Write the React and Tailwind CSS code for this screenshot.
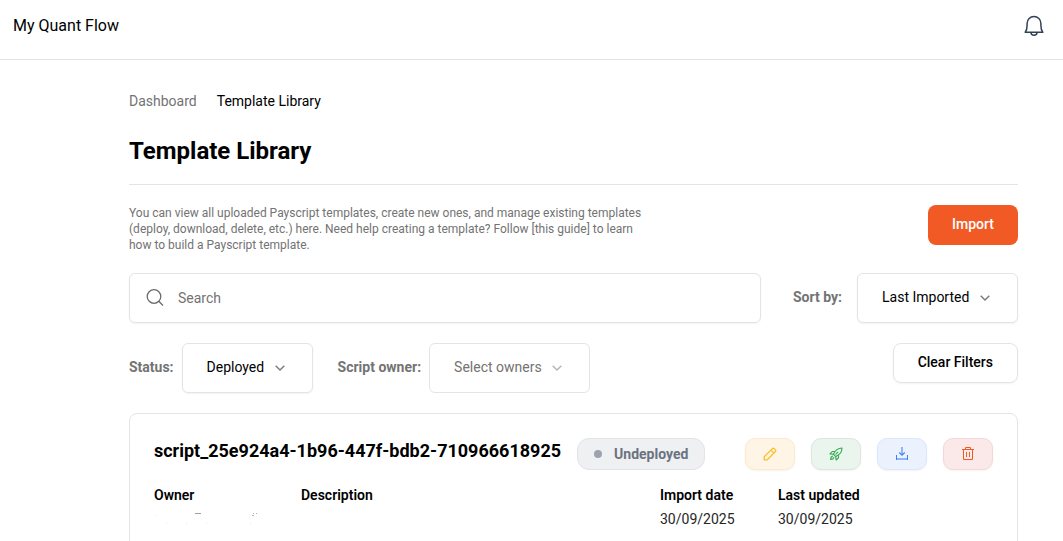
import React, { useState } from 'react';

// Icons
const BellIcon = () => (
  <svg viewBox="0 0 24 24" className="size-6" fill="none" stroke="#334155" strokeWidth="1.5" strokeLinejoin="round" aria-hidden="true">
    <path d="M3.2 18.3c1.3-1.6 1.9-3.7 1.9-6.8V9.4a6.9 6.9 0 0 1 13.8 0v2.1c0 3.1.6 5.2 1.9 6.8z" />
    <path d="M9 18.6a3 2.6 0 0 0 6 0" />
  </svg>
);

const SearchIcon = () => (
  <svg viewBox="0 0 18 18" className="size-[18px] shrink-0" fill="none" stroke="#6b6b6b" strokeWidth="1.3" aria-hidden="true">
    <circle cx="8" cy="7.500" r="6.800" />
    <path d="M12.800 12.300 17 16.500" />
  </svg>
);

const ChevronIcon = ({ className }) => (
  <svg viewBox="0 0 10 6" className={className} fill="none" stroke="currentColor" strokeWidth="1.4" aria-hidden="true">
    <path d="M.7.7 5 5 9.3.7" />
  </svg>
);

const PencilIcon = () => (
  <svg viewBox="0 0 14 14" className="size-3.5" fill="none" stroke="#fbbf24" strokeWidth="1.3" strokeLinejoin="round" aria-hidden="true">
    <path d="M1.2 12.8v-3L9.4 1.6a1.2 1.2 0 0 1 1.7 0l1.3 1.3a1.2 1.2 0 0 1 0 1.7l-8.2 8.2zM7.9 3.1l3 3" />
  </svg>
);

const RocketIcon = () => (
  <svg viewBox="0 0 14 14" className="size-3.5" fill="none" stroke="#34a853" strokeWidth="1.1" strokeLinejoin="round" strokeLinecap="round" aria-hidden="true">
    <path d="M4.4 7.2C6 3.6 8.8 1.1 13 1c0 4.2-2.6 7-6.2 8.6z" />
    <path d="M5.6 4.5H3.2L1 6.9l3.4.3M9.5 8.4v2.4L7.1 13l-.3-3.4" />
    <path d="M3.5 9.1c-1.4.4-1.9 1.6-1.9 3.3 1.7 0 2.9-.5 3.3-1.9M6.8 7.2l2-2" />
  </svg>
);

const DownloadIcon = () => (
  <svg viewBox="0 0 14 14" className="size-3.5" fill="none" aria-hidden="true">
    <path d="M7 0v8" stroke="#8fb5fb" strokeWidth="2" />
    <path d="M4.3 5.5 7 8.2l2.7-2.7" stroke="#3b82f6" strokeWidth="1.2" />
    <path d="M1 12h12" stroke="#8fb5fb" strokeWidth="2" />
    <path d="M1.5 8v5M12.5 8v5" stroke="#3b82f6" />
  </svg>
);

const TrashIcon = () => (
  <svg viewBox="0 0 14 14" className="size-3.5" fill="none" stroke="#f15a24" aria-hidden="true">
    <path d="M1 2.5h12M4.5 2V.5h5V2M2.5 2.5v10h9v-10M5.5 5v5M8.5 5v5" />
  </svg>
);

const FilterSelect = ({ id, options, muted }) => (
  <div className="relative">
    <select
      id={id}
      className={`h-[50px] appearance-none rounded-md border border-[#e4e4e7] bg-white pb-0.5 pl-6 pr-[47px] text-sm ${
        muted ? 'text-[#737373]' : 'text-black shadow-xs'
      }`}
    >
      {options.map((option) => (
        <option key={option}>{option}</option>
      ))}
    </select>
    <ChevronIcon
      className={`pointer-events-none absolute right-7 top-[22px] h-1.5 w-2.5 ${
        muted ? 'text-[#b5b5b5]' : 'text-[#7a7a7a]'
      }`}
    />
  </div>
);

const actions = [
  { label: 'Edit', Icon: PencilIcon, className: 'bg-[#fff5e6] border-[#feeacb]' },
  { label: 'Deploy', Icon: RocketIcon, className: 'bg-[#eaf6ed] border-[#dce5df]' },
  { label: 'Download', Icon: DownloadIcon, className: 'bg-[#ebf2fe] border-[#dbe7fd]' },
  { label: 'Delete', Icon: TrashIcon, className: 'bg-[#fbe9e9] border-[#f7d6d7]' },
];

const TemplateCard = ({ template }) => (
  <article className="min-h-60 rounded-lg border border-[#e4e4e7] p-6">
    <div className="flex items-center justify-between">
      <div className="flex items-center gap-4">
        <h2 className="pb-1.5 text-lg leading-6 font-bold">{template.name}</h2>
        <span className="flex h-8 items-center gap-3 rounded-xl border border-[#e1e3e8] bg-[#eff0f2] px-4 text-sm font-bold text-[#6b7280]">
          <span className="size-2 rounded-full bg-[#9ca3af]" />
          {template.status}
        </span>
      </div>
      <div className="flex gap-4">
        {actions.map(({ label, Icon, className }) => (
          <button
            key={label}
            aria-label={label}
            className={`flex h-8 w-[50px] items-center justify-center rounded-[10px] border shadow-xs ${className}`}
          >
            <Icon />
          </button>
        ))}
      </div>
    </div>

    <dl className="mt-[13px] flex text-sm leading-6">
      <div className="w-[147px]">
        <dt className="font-semibold">Owner</dt>
        <dd>
          <svg viewBox="0 0 110 16" className="mt-1 h-4 w-[110px]" fill="none" aria-hidden="true">
            <path d="M41 2.5h6" stroke="#9aa3ad" />
            <path d="M99 2.5h1M102 2.5h1M98 4.5h2" stroke="#a5b4c8" />
            <path d="M2 4.5h1M12 12.5h1M32 12.5h1M52 12.5h1M96 12.5h1" stroke="#e5e9ee" />
          </svg>
        </dd>
      </div>
      <div className="flex-1">
        <dt className="font-semibold">Description</dt>
      </div>
      <div className="w-[118px]">
        <dt className="font-semibold">Import date</dt>
        <dd className="text-[#262626]">{template.importDate}</dd>
      </div>
      <div className="w-[215px]">
        <dt className="font-semibold">Last updated</dt>
        <dd className="text-[#262626]">{template.lastUpdated}</dd>
      </div>
    </dl>
  </article>
);

const template = {
  name: 'script_25e924a4-1b96-447f-bdb2-710966618925',
  status: 'Undeployed',
  importDate: '30/09/2025',
  lastUpdated: '30/09/2025',
};

const App = () => {
  const [search, setSearch] = useState('');

  return (
    <div className="h-screen overflow-hidden bg-white font-[Roboto,sans-serif] text-black">
      <header className="flex h-[60px] items-start justify-between border-b border-[#e4e4e7] px-[13px] pt-3.5">
        <span className="text-base">My Quant Flow</span>
        <button aria-label="Notifications" className="mr-1">
          <BellIcon />
        </button>
      </header>

      <main className="pl-[129px] pr-[45px] pt-[31px]">
        <nav className="flex gap-5 text-sm">
          <a href="#dashboard" className="text-[#737373]">Dashboard</a>
          <a href="#templates">Template Library</a>
        </nav>

        <h1 className="mt-6 border-b border-[#e4e4e7] pb-[17px] text-2xl font-bold">Template Library</h1>

        <div className="mt-5 flex items-start justify-between">
          <p className="w-[520px] text-xs text-[#737373]">
            You can view all uploaded Payscript templates, create new ones, and manage existing templates (deploy,
            download, delete, etc.) here. Need help creating a template? Follow [this guide] to learn how to build a
            Payscript template.
          </p>
          <button className="h-10 rounded-lg bg-[#f15a24] px-6 pb-0.5 text-sm font-medium text-white">Import</button>
        </div>

        {/* Search and sort */}
        <div className="mt-5 flex items-center">
          <div className="flex h-[50px] flex-1 items-center gap-3.5 rounded-md border border-[#e4e4e7] px-4 shadow-xs">
            <SearchIcon />
            <input
              type="text"
              aria-label="Search"
              placeholder="Search"
              value={search}
              onChange={(e) => setSearch(e.target.value)}
              className="flex-1 text-sm outline-none placeholder:text-[#737373]"
            />
          </div>
          <label htmlFor="sort" className="ml-8 mr-[15px] pb-0.5 text-sm font-bold text-[#737373]">Sort by:</label>
          <FilterSelect id="sort" options={['Last Imported', 'Name']} />
        </div>

        {/* Filters */}
        <div className="my-5 flex items-start justify-between">
          <div className="flex items-center">
            <label htmlFor="status" className="mr-2 pb-0.5 text-sm font-bold text-[#737373]">Status:</label>
            <FilterSelect id="status" options={['Deployed', 'All']} />
            <label htmlFor="owner" className="ml-[25px] mr-2 pb-0.5 text-sm font-bold text-[#737373]">Script owner:</label>
            <FilterSelect id="owner" options={['Select owners']} muted />
          </div>
          <button className="h-10 rounded-lg border border-[#e4e4e7] px-6 pb-0.5 text-sm font-medium shadow-xs">
            Clear Filters
          </button>
        </div>

        <TemplateCard template={template} />
      </main>
    </div>
  );
};

export default App;
